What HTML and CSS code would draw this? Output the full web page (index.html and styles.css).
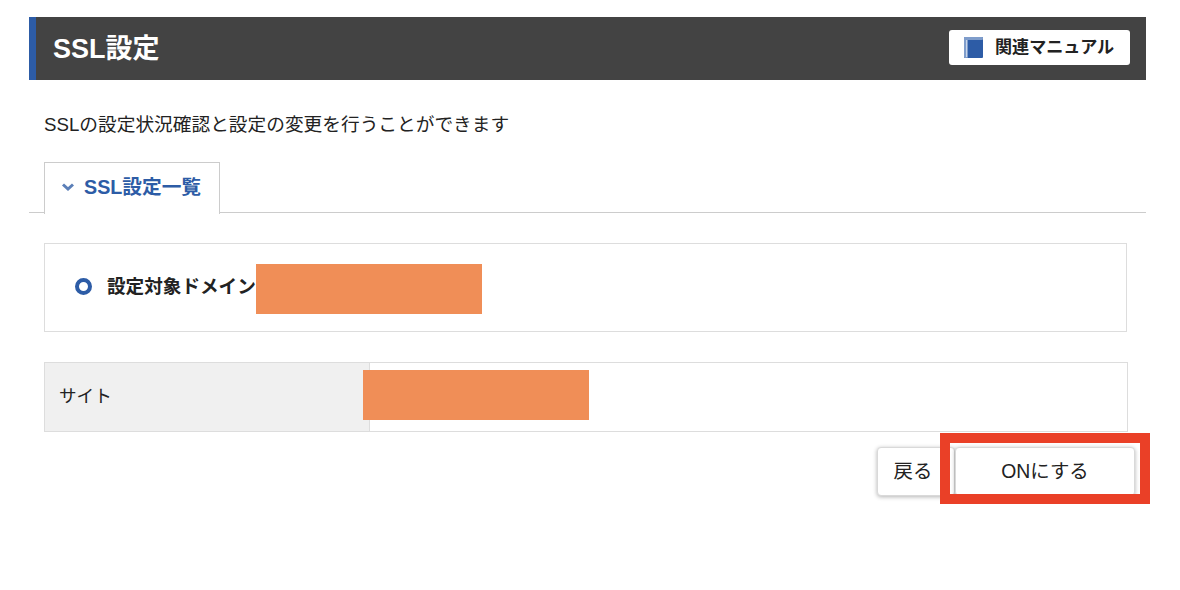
FILE: index.html

```html
<!DOCTYPE html>
<html lang="ja">
<head>
    <meta charset="UTF-8">
    <title>SSL設定</title>
    <link rel="stylesheet" href="styles.css">
</head>
<body>
    <div class="container">
        <div class="page-head">
            <h1>SSL設定</h1>
            <a class="manual-link" href="#">
                <svg class="book-icon" width="19" height="21" viewBox="0 0 19 21">
                    <rect x="0" y="0" width="19" height="21" rx="1" fill="#2d5ca6"/>
                    <rect x="0" y="0" width="19" height="3" rx="1" fill="#7f9dcb"/>
                    <rect x="0" y="0" width="4" height="21" rx="1" fill="#7f9dcb"/>
                    <rect x="2" y="3" width="1" height="17" fill="#c9d6ea"/>
                </svg>
                <span>関連マニュアル</span>
            </a>
        </div>

        <div class="content">
            <p class="lead">SSLの設定状況確認と設定の変更を行うことができます</p>
        </div>

        <div class="tabs">
            <div class="tab">
                <svg class="tab-arrow" width="14" height="10" viewBox="0 0 14 10">
                    <path d="M2 2.500 L7 7 L12 2.500" fill="none" stroke="#5b7fb8" stroke-width="3"/>
                </svg>
                <span>SSL設定一覧</span>
            </div>
        </div>

        <div class="content">
            <div class="domain-box">
                <span class="radio-mark"></span>
                <strong>設定対象ドメイン</strong>
                <span class="mask mask-domain"></span>
            </div>

            <div class="site-row">
                <div class="site-label">サイト</div>
                <div class="site-value"><span class="mask mask-site"></span></div>
            </div>

            <div class="actions">
                <button class="btn btn-back">戻る</button>
                <button class="btn btn-on">ONにする</button>
                <span class="highlight"></span>
            </div>
        </div>
    </div>
</body>
</html>
```

FILE: styles.css

```css
* {
    box-sizing: border-box;
}
body {
    margin: 0;
    background-color: #fff;
    color: #222;
    font-family: "Liberation Sans", "Noto Sans CJK JP", sans-serif;
}
.container {
    width: 1117px;
    margin: 17px 0 0 29px;
}
.page-head {
    display: flex;
    align-items: center;
    justify-content: space-between;
    height: 63px;
    padding: 0 16px 3px 17px;
    background-color: #434343;
    border-left: 7px solid #2d5ca6;
}
h1 {
    margin: 0 0 2px;
    color: #fff;
    font-size: 27px;
    font-weight: bold;
}
.manual-link {
    display: flex;
    align-items: center;
    width: 181px;
    height: 35px;
    padding-left: 15px;
    background-color: #fff;
    border-radius: 3px;
    color: #222;
    font-size: 17.1px;
    font-weight: bold;
    text-decoration: none;
}
.manual-link span {
    padding-bottom: 3px;
}
.book-icon {
    margin-right: 12px;
}
.content {
    padding-left: 15px;
}
.lead {
    margin: 0;
    padding-top: 31px;
    height: 82px;
    font-size: 18.7px;
    line-height: 27px;
}
.tabs {
    height: 51px;
    padding-left: 15px;
    border-bottom: 1px solid #ccc;
}
.tab {
    display: flex;
    align-items: center;
    width: 176px;
    height: 52px;
    padding: 0 0 3px 16px;
    background-color: #fff;
    border: 1px solid #ccc;
    border-bottom: none;
    color: #2d5ca6;
    font-size: 19.7px;
    font-weight: bold;
}
.tab span {
    padding-bottom: 4px;
}
.tab-arrow {
    margin-right: 9px;
}
.domain-box {
    position: relative;
    display: flex;
    align-items: center;
    width: 1083px;
    height: 89px;
    margin-top: 30px;
    padding: 0 0 2px 30px;
    border: 1px solid #ddd;
    font-size: 18.6px;
}
.domain-box strong {
    padding-bottom: 4px;
}
.radio-mark {
    width: 17px;
    height: 17px;
    margin-right: 15px;
    border: 4px solid #2d5ca6;
    border-radius: 50%;
}
.mask {
    position: absolute;
    width: 226px;
    height: 50px;
    background-color: #f08e57;
}
.mask-domain {
    left: 211px;
    top: 20px;
}
.mask-site {
    left: -7px;
    top: 7px;
}
.site-row {
    display: flex;
    width: 1084px;
    height: 70px;
    margin-top: 30px;
    border: 1px solid #ddd;
    font-size: 17.6px;
}
.site-label {
    display: flex;
    align-items: center;
    width: 325px;
    padding: 0 0 6px 14px;
    background-color: #f0f0f0;
    border-right: 1px solid #ddd;
}
.site-value {
    position: relative;
    flex: 1;
}
.actions {
    position: relative;
    display: flex;
    justify-content: flex-end;
    width: 1091px;
    height: 57px;
    margin-top: 15px;
}
.btn {
    height: 49px;
    padding: 0 0 4px;
    background-color: #fff;
    border: 1px solid #d9d9d9;
    border-radius: 4px;
    box-shadow: 0 1px 4px rgba(0,0,0,0.3);
    color: #222;
    font-family: inherit;
    font-size: 19.4px;
}
.btn-back {
    width: 78px;
    padding-right: 6px;
}
.btn-on {
    width: 180px;
}
.highlight {
    position: absolute;
    right: -15px;
    top: -14px;
    width: 210px;
    height: 71px;
    border: 10px solid #ea4027;
}
```
